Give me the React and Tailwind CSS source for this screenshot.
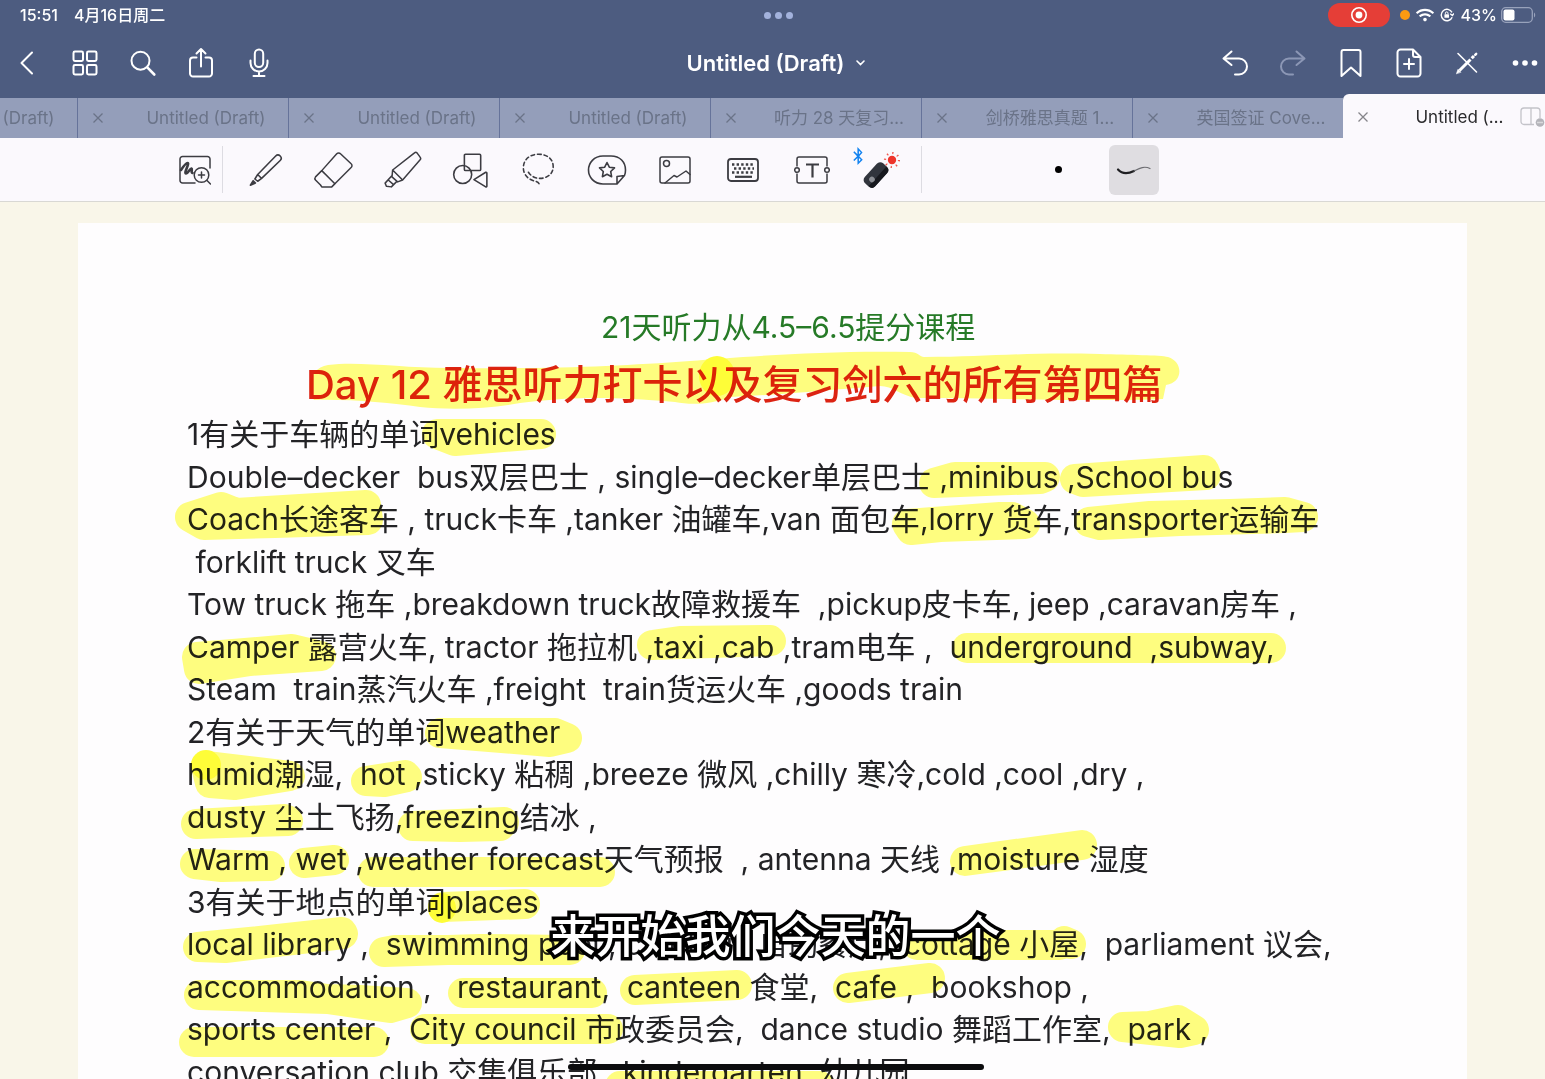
import React from 'react';
import { FaBluetoothB, FaWifi } from 'react-icons/fa';

const tabs = [
  'Untitled (Draft)',
  'Untitled (Draft)',
  'Untitled (Draft)',
  'Untitled (Draft)',
  '听力 28 天复习…',
  '剑桥雅思真题 1…',
  '英国签证 Cove…',
];

const lines = [
  '1有关于车辆的单词vehicles',
  'Double–decker  bus双层巴士 , single–decker单层巴士 ,minibus ,School bus',
  'Coach长途客车 , truck卡车 ,tanker 油罐车,van 面包车,lorry 货车,transporter运输车',
  ' forklift truck 叉车',
  'Tow truck 拖车 ,breakdown truck故障救援车  ,pickup皮卡车, jeep ,caravan房车 ,',
  'Camper 露营火车, tractor 拖拉机 ,taxi ,cab ,tram电车 ,  underground  ,subway,',
  'Steam  train蒸汽火车 ,freight  train货运火车 ,goods train',
  '2有关于天气的单词weather',
  'humid潮湿,  hot ,sticky 粘稠 ,breeze 微风 ,chilly 寒冷,cold ,cool ,dry ,',
  'dusty 尘土飞扬,freezing结冰 ,',
  'Warm , wet ,weather forecast天气预报  , antenna 天线 ,moisture 湿度',
  '3有关于地点的单词places',
  'local library ,  swimming pool , cafeteria 自助餐厅,  cottage 小屋,  parliament 议会,',
  'accommodation ,   restaurant,  canteen 食堂,  cafe ,  bookshop ,',
  'sports center ,  City council 市政委员会,  dance studio 舞蹈工作室,  park ,',
  'conversation club 交集俱乐部,  kindergarten  幼儿园',
];

// marker strokes laid over the note
const marks = [
  'M437 434H541L455 441Z',
  'M934 483L955 477H1045L1040 479Z',
  'M1075 479L1204 470L1206 475L1083 482Z',
  'M190 517L221 507L236 513L366 505L368 520L275 523L204 525Z',
  'M907 524L1000 517L1012 517L1025 524L940 527L911 530Z',
  'M1089 522L1150 516L1230 514L1285 512L1303 517L1285 518L1180 521L1100 525Z',
  'M197 657L292 649L321 656L250 661L199 669Z',
  'M652 645L680 641L770 640L771 641Z',
  'M967 648H1271',
  'M440 733H555L567 738L550 742Z',
  'M206 766L290 776L235 785L210 783Z',
  'M366 781L405 775L407 777L384 782Z',
  'M196 824L285 819L288 821Z',
  'M413 826L504 822L500 826L460 827Z',
  'M195 864L270 866L222 867Z',
  'M304 863L334 860',
  'M373 872H600',
  'M965 861L1082 845',
  'M443 907L525 904',
  'M198 947L225 948L343 934L342 932L260 941Z',
  'M384 952L395 950L570 950L480 949Z',
  'M917 945H1060L1064 941L1071 944',
  'M199 995H300L390 1008L407 1003L360 1000Z',
  'M463 993H592',
  'M635 990L737 985',
  'M848 988L930 978',
  'M194 1042H374',
  'M425 1029H608',
  'M1123 1027L1150 1026L1178 1020L1194 1030L1180 1033Z',
  'M620 1086H820',
];

const Icon = ({ children, className = 'size-8', width = 2 }) => (
  <svg
    className={className}
    viewBox="0 0 32 32"
    fill="none"
    stroke="currentColor"
    strokeWidth={width}
    strokeLinecap="round"
    strokeLinejoin="round"
    aria-hidden="true"
  >
    {children}
  </svg>
);

const NavButton = ({ label, className = '', children }) => (
  <button type="button" aria-label={label} className={`flex size-8 items-center justify-center ${className}`}>
    <Icon>{children}</Icon>
  </button>
);

const Tool = ({ label, children }) => (
  <button type="button" aria-label={label} className="relative flex flex-1 items-center justify-center">
    {children}
  </button>
);

const CloseButton = ({ label }) => (
  <button type="button" aria-label={label} className="flex w-10 shrink-0 items-center justify-center">
    <svg className="size-[10px]" viewBox="0 0 10 10" fill="none" stroke="currentColor" strokeWidth="1.3" aria-hidden="true">
      <path d="M0.5 0.5l9 9M9.5 0.5l-9 9" />
    </svg>
  </button>
);

const StatusBar = () => (
  <div className="grid h-[30px] grid-cols-[1fr_auto_1fr] items-center pr-[9px] pl-5 text-base font-medium">
    <div className="flex gap-4">
      <span>15:51</span>
      <span>4月16日周二</span>
    </div>
    <div className="flex gap-1">
      <span className="size-[7px] rounded-full bg-[#a3b2dc]" />
      <span className="size-[7px] rounded-full bg-[#a3b2dc]" />
      <span className="size-[7px] rounded-full bg-[#a3b2dc]" />
    </div>
    <div className="flex items-center justify-end">
      <span className="mr-[10px] flex h-6 w-[62px] items-center justify-center rounded-full bg-[#e53e37]">
        <svg className="size-[18px]" viewBox="0 0 18 18" aria-hidden="true">
          <circle cx="9" cy="9" r="7.2" fill="none" stroke="#fff" strokeWidth="1.6" />
          <circle cx="9" cy="9" r="3.4" fill="#fff" />
        </svg>
      </span>
      <span className="mr-[6px] size-[10px] rounded-full bg-[#fb9a12]" />
      <FaWifi className="mr-[6px] size-[18px]" />
      <svg className="mr-[7px] size-[14px]" viewBox="0 0 14 14" fill="none" stroke="currentColor" strokeWidth="1.4" aria-hidden="true">
        <path d="M12.2 9.2A5.7 5.7 0 1 1 12 4.400M10.200 5.800l2.200 1.800L14 5.400" />
        <rect x="4.400" y="6.200" width="4.600" height="3.600" rx="0.600" fill="currentColor" stroke="none" />
        <path d="M5.400 6.200V5.200a1.300 1.300 0 0 1 2.600 0v1" strokeWidth="1" />
      </svg>
      <span className="mr-1">43%</span>
      <svg className="h-4 w-[35px]" viewBox="0 0 35 16" aria-hidden="true">
        <rect x="0.7" y="0.7" width="30.6" height="14.6" rx="4" fill="none" stroke="#98a2bb" strokeWidth="1.3" />
        <rect x="2.5" y="2.5" width="11" height="11" rx="2" fill="#fff" />
        <path d="M33 5.5c1.6.8 1.6 4.2 0 5z" fill="#98a2bb" />
      </svg>
    </div>
  </div>
);

const NavBar = () => (
  <div className="grid h-16 grid-cols-[1fr_auto_1fr] items-center pt-px pr-1 pl-[11px]">
    <div className="flex gap-[26px]">
      <NavButton label="Back">
        <path d="M21 5.500L10.500 16 21 26.500" />
      </NavButton>
      <NavButton label="Thumbnails">
        <rect x="4.500" y="4.500" width="9.500" height="9.500" rx="1.400" />
        <rect x="18" y="4.500" width="9.500" height="9.500" rx="1.400" />
        <rect x="4.500" y="18" width="9.500" height="9.500" rx="1.400" />
        <rect x="18" y="18" width="9.500" height="9.500" rx="1.400" />
      </NavButton>
      <NavButton label="Search">
        <circle cx="13.500" cy="13.700" r="9" />
        <path d="M20.500 20.700l6.800 6.800" strokeWidth="2.600" />
      </NavButton>
      <NavButton label="Share">
        <path d="M11.500 10.500H8a3 3 0 0 0-3 3v13a3 3 0 0 0 3 3h16a3 3 0 0 0 3-3v-13a3 3 0 0 0-3-3h-3.500M16 19.500V2.500M11.500 6.500L16 2l4.500 4.500" />
      </NavButton>
      <NavButton label="Record audio">
        <rect x="11.800" y="2.500" width="8.400" height="17.500" rx="4.200" />
        <path d="M7.500 13.500V16a8.500 8.500 0 0 0 17 0v-2.500M16 24.500v4.500M10.500 29h11" />
      </NavButton>
    </div>
    <button type="button" className="flex items-center gap-3">
      <span className="text-[22px] leading-8 font-semibold">Untitled (Draft)</span>
      <svg className="h-[6px] w-[9px]" viewBox="0 0 9 6" fill="none" stroke="currentColor" strokeWidth="1.600" strokeLinecap="round" aria-hidden="true">
        <path d="M1 1l3.500 3.600L8 1" />
      </svg>
    </button>
    <div className="flex justify-end gap-[26px]">
      <NavButton label="Undo">
        <path d="M12.500 4.500L4.500 11.500l8 6.500M5 11.500h15a8 8 0 0 1 0 16h-4" />
      </NavButton>
      <NavButton label="Redo" className="text-[#8c97b5]">
        <path d="M19.500 4.500l8 7-8 6.500M27 11.500H12a8 8 0 0 0 0 16h4" />
      </NavButton>
      <NavButton label="Bookmark">
        <path d="M6.500 5a2 2 0 0 1 2-2h15a2 2 0 0 1 2 2v24L16 20.500 6.500 29z" />
      </NavButton>
      <NavButton label="Add page">
        <path d="M20 2.500H7.500a3 3 0 0 0-3 3v21a3 3 0 0 0 3 3h17a3 3 0 0 0 3-3V10zM20 2.500V8a2 2 0 0 0 2 2h5.500M16 12v10M11 17h10" />
      </NavButton>
      <NavButton label="Read only mode">
        <path d="M7 6.500L25.500 25" strokeWidth="1.600" />
        <g strokeLinecap="butt" strokeWidth="3">
          <path d="M8.500 23.500L19.500 12.500M20.700 11.300l2.300-2.300" />
          <path d="M24.200 7.800l1-1" strokeLinecap="round" strokeWidth="2.400" />
        </g>
        <path d="M5.500 26.500l1.500-4.200 2.700 2.700z" fill="currentColor" strokeWidth="0.600" />
      </NavButton>
      <NavButton label="More">
        <g fill="currentColor" stroke="none">
          <circle cx="6.500" cy="16" r="2.800" />
          <circle cx="16" cy="16" r="2.800" />
          <circle cx="25.500" cy="16" r="2.800" />
        </g>
      </NavButton>
    </div>
  </div>
);

const TabBar = () => (
  <div className="flex h-11 items-end justify-end overflow-hidden">
    {tabs.map((title, i) => (
      <div key={i} className="flex h-10 w-[211px] shrink-0 border-l border-[#66739a] bg-[#949eba] text-[#6a7388]">
        <CloseButton label={`Close ${title}`} />
        <button type="button" className="flex-1 pt-px pl-[6px] text-center text-[17px] whitespace-nowrap">
          {title}
        </button>
      </div>
    ))}
    <div className="-mr-[9px] flex h-11 w-[211px] shrink-0 rounded-tl-md bg-[#fbf9fd] pt-[2px] pr-2 text-[#85858a]">
      <CloseButton label="Close Untitled" />
      <button type="button" className="flex-1 pt-px pl-4 text-center text-[17px] whitespace-nowrap text-[#2a2a2c]">
        Untitled (…
      </button>
      <button type="button" aria-label="Split view" className="flex items-center text-[#c3c3c9]">
        <svg className="h-5 w-[26px]" viewBox="0 0 26 20" fill="none" stroke="currentColor" strokeWidth="1.300" aria-hidden="true">
          <path d="M14 17.500H4a3 3 0 0 1-3-3V4a3 3 0 0 1 3-3h13a3 3 0 0 1 3 3v7M11 1v16.500" />
          <circle cx="20" cy="15.500" r="4.300" fill="#b4b4ba" stroke="none" />
          <path d="M17.500 15.500h5" stroke="#fff" strokeDasharray="1 1" />
        </svg>
      </button>
    </div>
  </div>
);

const Toolbar = () => (
  <div className="flex h-16 items-stretch border-b border-[#d9d8d4] bg-[#fbf9fd] pl-[179px] text-[#3c3c42]">
    <button type="button" aria-label="Zoom window" className="mr-[11px] flex w-8 items-center justify-center">
      <Icon width={1.5}>
        <path d="M16 29H3.500A2.500 2.500 0 0 1 1 26.500V5a2.500 2.500 0 0 1 2.500-2.500h25A2.500 2.500 0 0 1 31 5v9" />
        <path d="M2 16c2-3 5-7 6.500-7 2.500 0-4 10-1.500 10.500 2 .3 4-5.500 5.500-5 1.300.5-1 4 1 4.500" strokeWidth="2.600" />
        <circle cx="22.500" cy="21" r="7.300" />
        <path d="M28 26.500l3.500 3.500M22.500 18v6M19.500 21h6" />
      </Icon>
    </button>
    <div className="my-2 mr-2 w-px bg-[#dddce2]" />
    <div className="flex w-[683px] pt-px">
      <Tool label="Pen">
        <Icon className="size-9" width={1.4}>
          <path d="M9.500 20L25.500 3.500a2.800 2.800 0 0 1 4 4L13 23.500zM9.500 20l-2.500 4 2.500 2 3.500-2.500" />
          <path d="M5.500 25.500L3 29.500l4.500-2z" fill="currentColor" />
        </Icon>
      </Tool>
      <Tool label="Eraser">
        <Icon className="size-10" width={1.2}>
          <path d="M7 16.500L19 3a2 2 0 0 1 3 0l8.500 8a2 2 0 0 1 0 3L17.500 27zM7 16.500L2 21.500a2 2 0 0 0 0 2.500l4 4 1 1.500h8l3-3" />
        </Icon>
      </Tool>
      <Tool label="Highlighter">
        <Icon className="size-10" width={1.2}>
          <path d="M8.500 16L26 2.300a1.500 1.500 0 0 1 2 0l2.500 3.400a1.500 1.500 0 0 1 0 2L16.500 24zM8.500 16l-.5 5.500 4.500 4 4-1.500M7.500 21L2.500 26.500l1 2.500 4 .5 4-4M5 24l4 3.500" />
        </Icon>
      </Tool>
      <Tool label="Shapes">
        <Icon className="size-9" width={1.4}>
          <rect x="11" y="2" width="14.500" height="14.500" rx="1" />
          <circle cx="9.500" cy="20" r="8" />
          <path d="M19.500 24.500L30 18a.8.8 0 0 1 1 .7v11.600a.8.8 0 0 1-1 .7z" />
        </Icon>
      </Tool>
      <Tool label="Lasso">
        <Icon className="size-9" width={1.4}>
          <path d="M7.500 18C13 27 29.500 24.500 29.500 13 29.500 6 24 2 16.500 2S3 6.500 3 14c0 6 4 10 9 11.500 4 1 5 2 5.500 4.500" strokeDasharray="3.200 2.600" />
        </Icon>
      </Tool>
      <Tool label="Elements">
        <svg className="h-8 w-10" viewBox="0 0 40 32" fill="none" stroke="currentColor" strokeWidth="1.600" strokeLinejoin="round" aria-hidden="true">
          <path d="M30 30H16C7 30 1.500 23 1.500 16S7 2 16 2h8c9 0 14.500 6 14.500 14 0 2-.3 4-1 5.500zM30 30v-7.500l7.500-1" />
          <path d="M20 8.500l2.300 4.700 5.200.7-3.800 3.600.9 5.200-4.600-2.500-4.600 2.500.9-5.200-3.800-3.600 5.200-.7z" />
        </svg>
      </Tool>
      <Tool label="Image">
        <Icon width={1.5}>
          <rect x="1" y="3" width="30" height="26" rx="2" />
          <circle cx="7.500" cy="9.500" r="3" />
          <path d="M6 29l9-7.500 3 1.500 9-6 4 3.500" />
        </Icon>
      </Tool>
      <Tool label="Keyboard">
        <Icon width={1.8}>
          <rect x="1" y="5" width="30" height="22" rx="3" />
          <path d="M5 10.500h22M7 14.500h20M5 18.500h22" strokeWidth="2.400" strokeDasharray="2.400 2.200" strokeLinecap="butt" />
          <path d="M8 22.800h17" strokeWidth="2.200" strokeLinecap="butt" />
        </Icon>
      </Tool>
      <Tool label="Text">
        <svg className="h-8 w-9" viewBox="0 0 36 32" fill="none" stroke="currentColor" strokeWidth="1.500" aria-hidden="true">
          <path d="M3 12.500V5a2 2 0 0 1 2-2h26a2 2 0 0 1 2 2v7.500M3 19.500V27a2 2 0 0 0 2 2h26a2 2 0 0 0 2-2v-7.500" />
          <circle cx="3" cy="16" r="2.300" />
          <circle cx="33" cy="16" r="2.300" />
          <path d="M12 10.500h13M18.500 10.500v13" strokeWidth="2.200" />
        </svg>
      </Tool>
      <Tool label="Laser pointer">
        <svg className="size-10" viewBox="0 0 40 40" aria-hidden="true">
          <g transform="rotate(-48 16 25)">
            <rect x="2.500" y="18" width="27" height="14" rx="4.500" fill="#31353d" />
            <path d="M3 27h26v1a4 4 0 0 1-4 4H7a4 4 0 0 1-4-4z" fill="#17191e" />
            <circle cx="10" cy="25" r="2.800" fill="#8d9096" />
          </g>
          <circle cx="32" cy="10" r="4.200" fill="#ee342b" />
          <circle cx="32" cy="10" r="7" fill="none" stroke="#ee5a52" strokeWidth="2.200" strokeDasharray="1.300 4.198" />
        </svg>
        <FaBluetoothB className="absolute top-2 left-1 h-[18px] w-4 text-[#1283f0]" />
      </Tool>
    </div>
    <div className="my-2 ml-[7px] w-px bg-[#dddce2]" />
    <div className="flex items-center gap-[26px] pl-[111px]">
      <button type="button" aria-label="Dot size" className="flex size-[50px] items-center justify-center">
        <span className="size-[7px] rounded-full bg-black" />
      </button>
      <button type="button" aria-label="Stroke style" className="flex size-[50px] items-center justify-center rounded-md bg-[#dfdde1]">
        <svg className="h-4 w-9" viewBox="0 0 36 16" fill="none" strokeLinecap="round" aria-hidden="true">
          <path d="M2 7.500c4 4.500 10 4.500 16 1.500" stroke="#1f1f22" strokeWidth="2.200" />
          <path d="M18 9c5-2.500 10-5.500 16-2.500" stroke="#6d6d72" strokeWidth="1.200" />
        </svg>
      </button>
    </div>
  </div>
);

const Note = () => (
  <article className="relative mx-[78px] mt-[21px] h-full bg-[#fefdfe] pt-[83px] pl-[109px] text-[30px] whitespace-pre text-[#232326]">
    <h2 className="h-[42px] pl-[414px] leading-[42px] text-[#267a27]">21天听力从4.5–6.5提分课程</h2>
    <h1 className="mt-[10px] mb-px h-[54px] pl-[119px] text-[40px] leading-[54px] font-medium text-[#dc2313]">
      Day 12 雅思听力打卡以及复习剑六的所有第四篇
    </h1>
    <div>
      {lines.map((line) => (
        <p key={line} className="h-[42px] leading-[42px] odd:h-[43px]">
          {line}
        </p>
      ))}
    </div>
    <svg
      className="pointer-events-none absolute top-0 left-0 h-[856px] w-[1388px] mix-blend-multiply"
      viewBox="78 223 1388 856"
      fill="#ffff80"
      stroke="#ffff80"
      strokeWidth="30"
      strokeLinecap="round"
      strokeLinejoin="round"
      aria-hidden="true"
    >
      <path
        strokeWidth="0"
        d="M314 400C304 386 312 367 328 365C360 361 400 368 450 368C560 369 620 366 690 361C740 357 830 350 910 352C918 352 920 357 924 357C990 357 1020 352 1100 354C1130 355 1160 355 1168 357C1184 362 1183 383 1166 385L1163 399C1100 402 1000 398 915 398C900 395 893 386 880 386C830 390 790 394 730 397C710 405 690 405 675 402C600 395 560 398 520 403C490 409 450 410 420 407C390 403 350 399 314 400Z"
      />
      {marks.map((d) => (
        <path key={d} d={d} />
      ))}
      <g stroke="none" fill="#ffff38">
        <ellipse cx="717" cy="376" rx="18" ry="20" />
        <circle cx="206" cy="765" r="15" />
        <ellipse cx="442" cy="908" rx="14" ry="15" />
      </g>
    </svg>
  </article>
);

export default function App() {
  return (
    <div className="relative flex h-screen flex-col overflow-hidden bg-[#f9f6e9] font-[Inter,'Noto_Sans_CJK_SC',sans-serif]">
      <header className="bg-[#4d5c80] text-white">
        <StatusBar />
        <NavBar />
        <TabBar />
      </header>
      <Toolbar />
      <main className="min-h-0 flex-1 overflow-hidden">
        <Note />
      </main>

      {/* caption and home indicator */}
      <div className="pointer-events-none absolute inset-x-0 bottom-0 flex flex-col items-center pb-[9px] pl-[6px]">
        <p className="mb-[95px] text-[45px] leading-[64px] font-medium text-white [-webkit-text-stroke:7px_black] [paint-order:stroke_fill]">
          来开始我们今天的一个
        </p>
        <div className="h-[6px] w-[416px] rounded-full bg-[#0c0c0e]" />
      </div>
    </div>
  );
}
